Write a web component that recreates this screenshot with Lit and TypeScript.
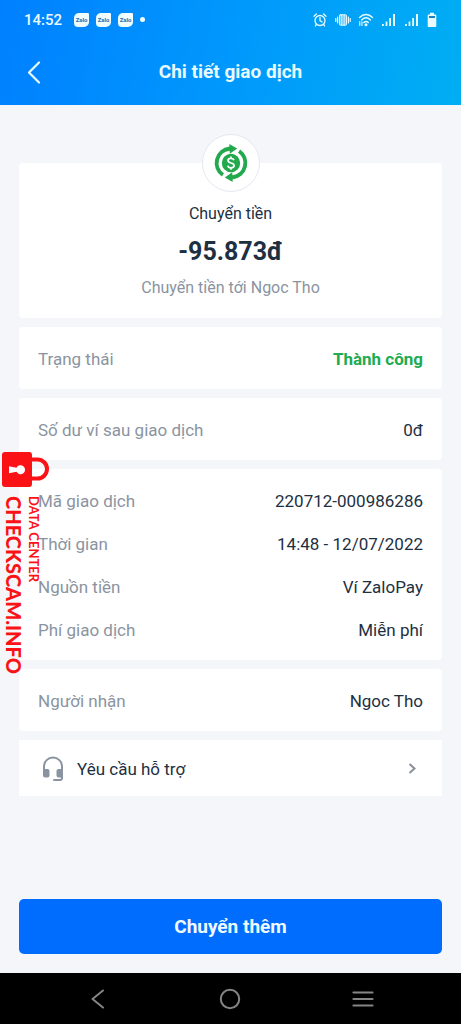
import { LitElement, html, css, svg } from "lit";
import { customElement, property } from "lit/decorators.js";

interface Row {
  label: string;
  value: string;
  success?: boolean;
}

@customElement("detail-card")
class DetailCard extends LitElement {
  @property({ attribute: false }) rows: Row[] = [];

  static styles = css`
    :host {
      display: block;
      background: #fff;
      border-radius: 4px;
      padding: 20px 19px 18px;
    }
    .list {
      margin: 0;
      display: flex;
      flex-direction: column;
      gap: 19px;
    }
    .row {
      display: flex;
      justify-content: space-between;
      gap: 16px;
      font-size: 17px;
      line-height: 24px;
    }
    .label {
      color: #8a94a1;
    }
    .value {
      margin: 0;
      color: #1d3042;
      text-align: right;
    }
    .success {
      color: #21ab50;
      font-weight: 700;
    }
  `;

  render() {
    return html`<dl class="list">
      ${this.rows.map(
        (r) => html`<div class="row">
          <dt class="label">${r.label}</dt>
          <dd class="value ${r.success ? "success" : ""}">${r.value}</dd>
        </div>`
      )}
    </dl>`;
  }
}

@customElement("status-bar")
class StatusBar extends LitElement {
  static styles = css`
    :host {
      display: flex;
      align-items: center;
      justify-content: space-between;
      height: 39px;
      padding: 0 24px;
      color: #e9fbff;
    }
    .side {
      display: flex;
      align-items: center;
      gap: 7px;
    }
    .time {
      font-size: 15px;
      line-height: 20px;
      font-weight: 500;
      margin-right: 5px;
    }
    .zalo {
      width: 15px;
      height: 14px;
      border-radius: 5px 1px 5px 4px;
      background: #effdff;
      color: #2c6fae;
      font-size: 6px;
      line-height: 14px;
      font-weight: 700;
      text-align: center;
    }
    .dot {
      width: 5px;
      height: 5px;
      border-radius: 50%;
      background: #effdff;
    }
    svg {
      display: block;
    }
  `;

  private signal() {
    return html`<svg width="16" height="16" viewBox="0 0 16 16" fill="currentColor" aria-hidden="true">
      <rect x="1" y="12" width="1.8" height="2" />
      <rect x="4.6" y="9.5" width="1.8" height="4.5" />
      <rect x="8.2" y="6" width="1.8" height="8" />
      <rect x="12" y="2" width="2" height="12" />
    </svg>`;
  }

  render() {
    return html`
      <div class="side">
        <span class="time">14:52</span>
        <span class="zalo">Zalo</span>
        <span class="zalo">Zalo</span>
        <span class="zalo">Zalo</span>
        <span class="dot"></span>
      </div>
      <div class="side">
        <svg width="16" height="16" viewBox="0 0 16 16" fill="none" stroke="currentColor" stroke-width="1.3" stroke-linecap="round" aria-hidden="true">
          <circle cx="8" cy="8.5" r="5" />
          <path d="M8 5.5v3.2l2 1.2M2 4.2 4.4 2M14 4.2 11.6 2M4.4 12.5l-1 1.4M11.6 12.5l1 1.4" />
        </svg>
        <svg width="16" height="16" viewBox="0 0 16 16" fill="none" stroke="currentColor" stroke-linecap="round" aria-hidden="true">
          <rect x="4.5" y="2.8" width="7" height="10.4" rx="0.8" fill="currentColor" fill-opacity="0.45" />
          <path d="M6.8 3v10M9.2 3v10" stroke-width="0.8" />
          <path d="M2.6 5v6M13.4 5v6M0.8 6.6v2.8M15.2 6.6v2.8" stroke-width="1.2" />
        </svg>
        <svg width="16" height="16" viewBox="0 0 16 16" fill="none" stroke="currentColor" stroke-width="1.4" stroke-linecap="round" aria-hidden="true">
          <path d="M1.5 5.4C5.5 1.6 10.7 1.6 14.5 5.4" />
          <path d="M3.6 8C6.3 5.4 9.8 5.4 12.4 8" />
          <path d="M5.8 10.5c1.5-1.4 3.1-1.4 4.5 0" />
          <circle cx="8" cy="12.8" r="0.8" fill="currentColor" />
          <path d="M1.8 9.5v4M4 9.8v3.7" stroke-width="1.1" />
        </svg>
        ${this.signal()} ${this.signal()}
        <svg width="10" height="16" viewBox="0 0 10 16" fill="currentColor" aria-hidden="true">
          <path d="M3 0.8h4v1.7h1.5q.8 0 .8.8v11q0 .8-.8.8h-7q-.8 0-.8-.8v-11q0-.8.8-.8H3z" />
          <path d="M2 4h6v2H2z" fill="#1487c0" />
        </svg>
      </div>
    `;
  }
}

@customElement("app-root")
class AppRoot extends LitElement {
  static styles = css`
    :host {
      display: flex;
      flex-direction: column;
      min-height: 100vh;
      background: #f4f6f9;
      font-family: Roboto, "Noto Sans", sans-serif;
      color: #1d3042;
    }
    svg {
      display: block;
    }
    button {
      font: inherit;
      border: 0;
      padding: 0;
      background: none;
      color: inherit;
      cursor: pointer;
    }
    .top {
      background: linear-gradient(100deg, #0080ff 0%, #0098fc 50%, #00aef3 100%);
      color: #e9fbff;
    }
    .bar {
      display: grid;
      grid-template-columns: 24px 1fr 24px;
      align-items: center;
      height: 66px;
      padding: 0 22px;
    }
    .title {
      margin: 0;
      font-size: 19px;
      line-height: 24px;
      font-weight: 700;
      text-align: center;
    }
    .content {
      flex: 1;
      display: flex;
      flex-direction: column;
      gap: 9px;
      padding: 58px 19px 19px;
    }
    .summary {
      display: flex;
      flex-direction: column;
      align-items: center;
      background: #fff;
      border-radius: 4px;
      padding: 0 19px 18px;
      text-align: center;
    }
    .badge {
      display: grid;
      place-items: center;
      box-sizing: border-box;
      width: 58px;
      height: 58px;
      margin-top: -29px;
      border: 1px solid #e4e8f2;
      border-radius: 50%;
      background: #fff;
    }
    .kind {
      margin: 10px 0 0;
      font-size: 16px;
      line-height: 24px;
    }
    .amount {
      margin: 8px 0 6px;
      font-size: 25px;
      line-height: 36px;
      font-weight: 700;
    }
    .note {
      margin: 0;
      font-size: 16px;
      line-height: 24px;
      color: #8a94a1;
    }
    .details {
      position: relative;
    }
    .watermark {
      position: absolute;
      top: -17px;
      left: -17px;
      color: #fb1216;
      pointer-events: none;
    }
    .stamp {
      display: flex;
      flex-direction: row-reverse;
      justify-content: flex-end;
      gap: 4px;
      padding: 8px 0 0 2px;
      font-family: Lato, "Open Sans", sans-serif;
      white-space: nowrap;
    }
    .site {
      writing-mode: vertical-rl;
      font-size: 20px;
      line-height: 20px;
      font-weight: 900;
    }
    .tag {
      writing-mode: vertical-rl;
      font-size: 13px;
      line-height: 12px;
      font-weight: 700;
    }
    .support {
      display: flex;
      align-items: center;
      gap: 12px;
      padding: 16px 24px 14px 22px;
      background: #fff;
      color: inherit;
      text-decoration: none;
      font-size: 17px;
      line-height: 24px;
    }
    .grow {
      flex: 1;
    }
    .more {
      margin-top: auto;
      height: 55px;
      border-radius: 5px;
      background: #006dff;
      color: #f0fbff;
      font-size: 19px;
      line-height: 24px;
      font-weight: 700;
    }
    .nav {
      display: flex;
      justify-content: space-around;
      align-items: center;
      height: 51px;
      padding: 0 32px;
      background: #000;
      color: #858585;
    }
  `;

  render() {
    const arrow = svg`
      <path d="M9.8 33.6A16.5 16.5 0 0 1 17.5 3.6L17.3 1 25.2 5.6 17.8 10.8 17.6 7.8A12.3 12.3 0 0 0 12 30.2z" />`;
    return html`
      <header class="top">
        <status-bar></status-bar>
        <div class="bar">
          <button aria-label="Quay lại">
            <svg width="24" height="24" viewBox="0 0 24 24" fill="none" stroke="currentColor" stroke-width="2.2" stroke-linecap="round" stroke-linejoin="round">
              <path d="M17 2.5 7 12.500 17 22.500" />
            </svg>
          </button>
          <h1 class="title">Chi tiết giao dịch</h1>
        </div>
      </header>
      <main class="content">
        <section class="summary">
          <div class="badge">
            <svg width="38" height="40" viewBox="0 0 38 40" fill="#23a94d" aria-hidden="true">
              ${arrow}
              <g transform="rotate(180 19 20)">${arrow}</g>
              <circle cx="19" cy="20" r="9.2" />
              <path d="M22 17.2C21.600 15.900 20.600 15.300 19 15.300c-1.800 0-3 .9-3 2.300 0 3.200 6.100 1.600 6.100 4.900 0 1.400-1.200 2.300-3.100 2.300-1.800 0-2.900-.8-3.200-2.200M19 13.400v1.900M19 24.800v1.900" fill="none" stroke="#fff" stroke-width="1.7" />
            </svg>
          </div>
          <p class="kind">Chuyển tiền</p>
          <p class="amount">-95.873đ</p>
          <p class="note">Chuyển tiền tới Ngoc Tho</p>
        </section>
        <detail-card .rows=${[{ label: "Trạng thái", value: "Thành công", success: true }]}></detail-card>
        <detail-card .rows=${[{ label: "Số dư ví sau giao dịch", value: "0đ" }]}></detail-card>
        <div class="details">
          <detail-card
            .rows=${[
              { label: "Mã giao dịch", value: "220712-000986286" },
              { label: "Thời gian", value: "14:48 - 12/07/2022" },
              { label: "Nguồn tiền", value: "Ví ZaloPay" },
              { label: "Phí giao dịch", value: "Miễn phí" },
            ]}
          ></detail-card>
          <div class="watermark">
            <svg width="47" height="36" viewBox="0 0 47 36" aria-hidden="true">
              <path d="M29 7.500h6.500a9.300 9.300 0 0 1 0 19H29" fill="none" stroke="#fb1216" stroke-width="4" />
              <rect x="0" y="0" width="30" height="35" rx="3" fill="#fb1216" />
              <path d="M7 14.200 14.500 15.800A4.500 4.500 0 1 1 14.500 19.700L7 21.300z" fill="#fff" />
            </svg>
            <div class="stamp">
              <span class="tag">DATA CENTER</span>
              <span class="site">CHECKSCAM.INFO</span>
            </div>
          </div>
        </div>
        <detail-card .rows=${[{ label: "Người nhận", value: "Ngoc Tho" }]}></detail-card>
        <a class="support" href="#">
          <svg width="24" height="26" viewBox="0 0 24 26" fill="#8a94a1" aria-hidden="true">
            <path d="M3 15V10.500a9 9 0 0 1 18 0V22q0 2-2 2H13" fill="none" stroke="#8a94a1" stroke-width="2" stroke-linecap="round" />
            <rect x="2" y="13" width="6.500" height="8.500" rx="2" />
            <rect x="15.500" y="13" width="6.500" height="8.500" rx="2" />
          </svg>
          <span class="grow">Yêu cầu hỗ trợ</span>
          <svg width="12" height="14" viewBox="0 0 12 14" fill="none" stroke="#8a8f98" stroke-width="2" aria-hidden="true">
            <path d="M3.500 2 8.500 6.500 3.500 11" />
          </svg>
        </a>
        <button class="more">Chuyển thêm</button>
      </main>
      <nav class="nav">
        <button aria-label="Trở về">
          <svg width="24" height="24" viewBox="0 0 24 24" fill="none" stroke="currentColor" stroke-width="2" stroke-linecap="round" stroke-linejoin="round">
            <path d="M17 3.500 6.500 12 17 20.500" />
          </svg>
        </button>
        <button aria-label="Trang chủ">
          <svg width="24" height="24" viewBox="0 0 24 24" fill="none" stroke="currentColor" stroke-width="2">
            <circle cx="12" cy="12" r="9.200" />
          </svg>
        </button>
        <button aria-label="Ứng dụng gần đây">
          <svg width="24" height="24" viewBox="0 0 24 24" fill="none" stroke="currentColor" stroke-width="2.200" stroke-linecap="round">
            <path d="M2.500 5.500h19M2.500 12h19M2.500 18.500h19" />
          </svg>
        </button>
      </nav>
    `;
  }
}
